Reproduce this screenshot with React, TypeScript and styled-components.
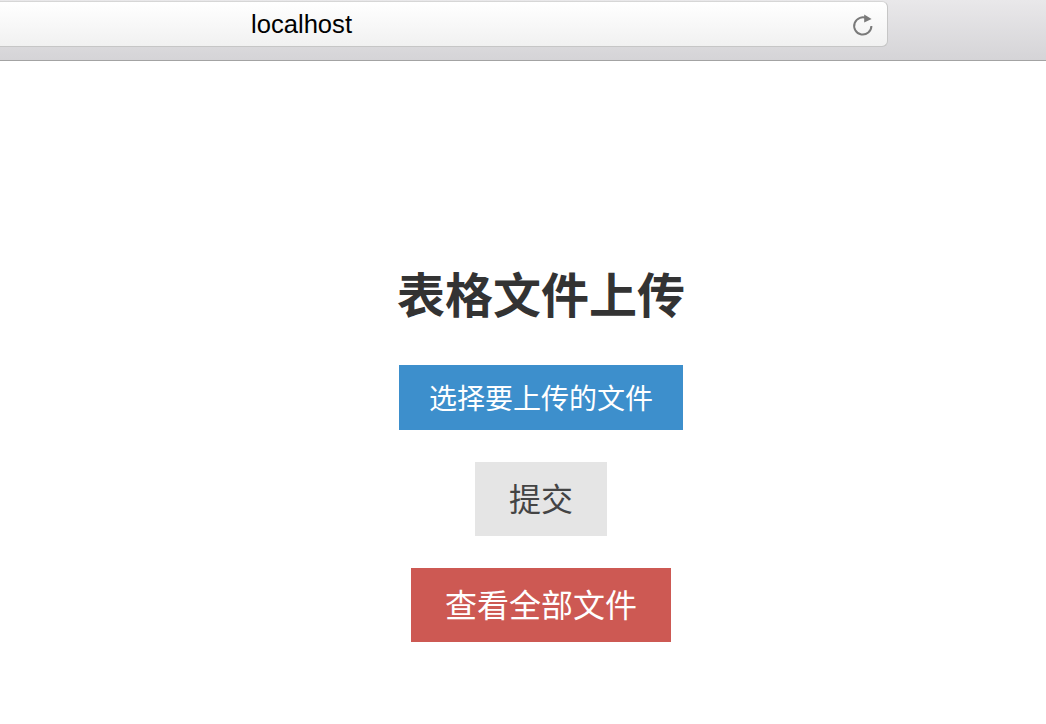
import styled, { createGlobalStyle } from "styled-components"

const GlobalStyle = createGlobalStyle`
    html, body {
        margin: 0;
        padding: 0;
        background: #ffffff;
    }
    body {
        font-family: "Noto Sans CJK SC", "Noto Sans", sans-serif;
    }
`

export default function App() {
    return (
        <>
            <GlobalStyle />
            <Chrome>
                <AddressBar>
                    <Url>localhost</Url>
                    <Reload>
                        <svg width="24" height="24" viewBox="0 0 24 24">
                            <path
                                d="M16.2 5.6 A8.6 8.6 0 1 0 20.4 13"
                                fill="none"
                                stroke="#7a7a7a"
                                strokeWidth="2"
                            />
                            <path d="M13.2 1.4 L20.6 6 L13.2 9.6 Z" fill="#7a7a7a" />
                        </svg>
                    </Reload>
                </AddressBar>
            </Chrome>
            <Main>
                <Title>表格文件上传</Title>
                <Button $bg="#3d8fcc" $color="#ffffff" $size="28px" $pad="12px 30px">
                    选择要上传的文件
                </Button>
                <Button $bg="#e5e5e5" $color="#444444" $size="32px" $pad="12px 34px 16px">
                    提交
                </Button>
                <Button $bg="#cd5953" $color="#ffffff" $size="32px" $pad="12px 34px 16px">
                    查看全部文件
                </Button>
            </Main>
        </>
    )
}

const Chrome = styled.header`
    height: 59px;
    background: linear-gradient(#e9e8ea, #d5d4d7);
    border-bottom: 1px solid #a3a3a3;
    box-sizing: content-box;
    padding-top: 1px;
`

const AddressBar = styled.div`
    position: relative;
    margin-left: -10px;
    width: 898px;
    height: 46px;
    box-sizing: border-box;
    background: linear-gradient(#ffffff, #f1f1f1);
    border: 1px solid #c6c6c6;
    border-top-color: #d6d6d6;
    border-radius: 0 6px 6px 0;
    display: flex;
    align-items: center;
`

const Url = styled.span`
    margin-left: 260px;
    font-family: "Liberation Sans", Arial, sans-serif;
    font-size: 25.6px;
    color: #000000;
    line-height: 1;
    padding-top: 2px;
`

const Reload = styled.div`
    position: absolute;
    right: 12px;
    top: 11px;
    width: 24px;
    height: 24px;
    display: flex;
`

const Main = styled.main`
    display: flex;
    flex-direction: column;
    align-items: center;
    padding-left: 36px;
    padding-top: 201px;
`

const Title = styled.h1`
    margin: 0 0 43px;
    font-size: 48px;
    line-height: 60px;
    font-weight: 700;
    color: #333333;
`

const Button = styled.button<{ $bg: string; $color: string; $size: string; $pad: string }>`
    border: none;
    border-radius: 0;
    margin: 0 0 32px;
    background: ${(p) => p.$bg};
    color: ${(p) => p.$color};
    font-family: "Noto Sans CJK SC", "Noto Sans", sans-serif;
    font-size: ${(p) => p.$size};
    line-height: 1.45;
    padding: ${(p) => p.$pad};
    cursor: pointer;
`
